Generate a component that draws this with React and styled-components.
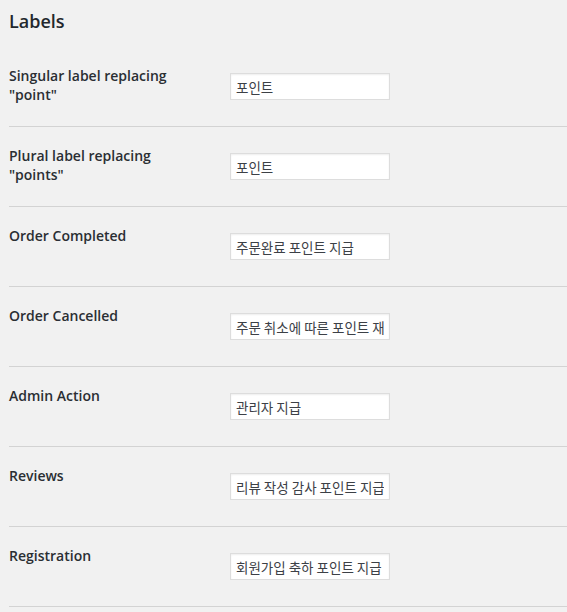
import React from "react";
import styled, { createGlobalStyle } from "styled-components";

const GlobalStyle = createGlobalStyle`
  body {
    margin: 0;
    background: #f1f1f1;
    font-family: "Open Sans", "Noto Sans CJK KR", sans-serif;
    color: #23282d;
  }
`;

const Wrap = styled.div`
  padding: 10px 0 0 9px;
`;

const Title = styled.h2`
  margin: 0 0 14px;
  font-size: 18px;
  line-height: 23.4px;
  font-weight: 600;
  color: #23282d;
`;

const Row = styled.div`
  display: grid;
  grid-template-columns: 210px 1fr;
  height: 80px;
  box-sizing: border-box;
  border-bottom: 1px solid #d3d3d3;
`;

const Label = styled.label`
  padding-top: 20px;
  width: 200px;
  font-size: 14px;
  line-height: 18.2px;
  font-weight: 600;
  color: #2a2e33;
`;

const Field = styled.div`
  padding: 26px 0 0 11px;
`;

const TextInput = styled.input`
  display: block;
  box-sizing: border-box;
  width: 160px;
  height: 27px;
  margin: 0;
  padding: 0 5px;
  border: 1px solid #ddd;
  box-shadow: inset 0 1px 2px rgba(0, 0, 0, 0.07);
  background: #fff;
  color: #3c4046;
  font-family: "Noto Sans CJK KR", sans-serif;
  font-size: 13.5px;
  outline: none;
`;

const labels = [
  { id: "singular", label: 'Singular label replacing "point"', value: "포인트" },
  { id: "plural", label: 'Plural label replacing "points"', value: "포인트" },
  { id: "completed", label: "Order Completed", value: "주문완료 포인트 지급" },
  { id: "cancelled", label: "Order Cancelled", value: "주문 취소에 따른 포인트 재차감" },
  { id: "admin", label: "Admin Action", value: "관리자 지급" },
  { id: "reviews", label: "Reviews", value: "리뷰 작성 감사 포인트 지급" },
  { id: "registration", label: "Registration", value: "회원가입 축하 포인트 지급" },
];

const App = () => {
  return (
    <Wrap>
      <GlobalStyle />
      <Title>Labels</Title>
      {labels.map((item) => (
        <Row key={item.id}>
          <Label htmlFor={item.id}>{item.label}</Label>
          <Field>
            <TextInput id={item.id} type="text" defaultValue={item.value} />
          </Field>
        </Row>
      ))}
    </Wrap>
  );
};

export default App;
